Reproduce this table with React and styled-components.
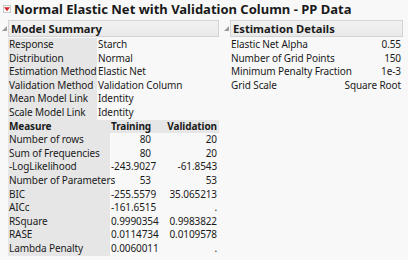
import React from 'react';
import styled, { createGlobalStyle } from 'styled-components';

const GlobalStyle = createGlobalStyle`
  html, body {
    margin: 0;
    padding: 0;
    background: #f8f8f8;
  }
  body {
    font-family: "Noto Sans", "Open Sans", sans-serif;
    font-size: 10px;
    letter-spacing: -0.1px;
    color: #1a1a1a;
  }
`;

const summaryRows = [
  ['Response', 'Starch'],
  ['Distribution', 'Normal'],
  ['Estimation Method', 'Elastic Net'],
  ['Validation Method', 'Validation Column'],
  ['Mean Model Link', 'Identity'],
  ['Scale Model Link', 'Identity'],
];

const measureRows = [
  ['Number of rows', '80', '20'],
  ['Sum of Frequencies', '80', '20'],
  ['-LogLikelihood', '-243.9027', '-61.8543'],
  ['Number of Parameters', '53', '53'],
  ['BIC', '-255.5579', '35.065213'],
  ['AICc', '-161.6515', '.'],
  ['RSquare', '0.9990354', '0.9983822'],
  ['RASE', '0.0114734', '0.0109578'],
  ['Lambda Penalty', '0.0060011', '.'],
];

const detailRows = [
  ['Elastic Net Alpha', '0.55'],
  ['Number of Grid Points', '150'],
  ['Minimum Penalty Fraction', '1e-3'],
  ['Grid Scale', 'Square Root'],
];

const App = () => {
  return (
    <Page>
      <GlobalStyle />
      <TitleRow>
        <RedToggle>
          <svg width="7" height="5" viewBox="0 0 7 5">
            <polygon points="0,0 7,0 3.5,4.5" fill="#d8242a" />
          </svg>
        </RedToggle>
        <TitleText>Normal Elastic Net with Validation Column - PP Data</TitleText>
      </TitleRow>
      <Panels>
        <Outline $width="219px">
          <OutlineHead>
            <GrayToggle />
            <HeadBox>Model Summary</HeadBox>
          </OutlineHead>
          <OutlineBody>
            <Table>
              <colgroup>
                <col style={{ width: 89 }} />
                <col />
              </colgroup>
              <tbody>
                {summaryRows.map(([k, v]) => (
                  <tr key={k}>
                    <LabelCell>{k}</LabelCell>
                    <ValueCell>{v}</ValueCell>
                  </tr>
                ))}
              </tbody>
            </Table>
            <Table>
              <colgroup>
                <col style={{ width: 102 }} />
                <col style={{ width: 43 }} />
                <col />
              </colgroup>
              <thead>
                <tr>
                  <HeadCell>Measure</HeadCell>
                  <HeadCell $right>Training</HeadCell>
                  <HeadCell $right>Validation</HeadCell>
                </tr>
              </thead>
              <tbody>
                {measureRows.map(([k, t, v]) => (
                  <tr key={k}>
                    <LabelCell>{k}</LabelCell>
                    <NumCell>{t}</NumCell>
                    <NumCell>{v}</NumCell>
                  </tr>
                ))}
              </tbody>
            </Table>
          </OutlineBody>
        </Outline>
        <Outline $width="181px">
          <OutlineHead>
            <GrayToggle />
            <HeadBox>Estimation Details</HeadBox>
          </OutlineHead>
          <OutlineBody>
            <Table>
              <tbody>
                {detailRows.map(([k, v]) => (
                  <tr key={k}>
                    <PlainCell>{k}</PlainCell>
                    <NumCell>{v}</NumCell>
                  </tr>
                ))}
              </tbody>
            </Table>
          </OutlineBody>
        </Outline>
      </Panels>
    </Page>
  );
};

export default App;

const Page = styled.div`
  width: 408px;
  height: 260px;
  overflow: hidden;
`;

const TitleRow = styled.div`
  display: flex;
  align-items: center;
  gap: 3px;
  height: 18px;
  padding-left: 3px;
  letter-spacing: 0;
`;

const RedToggle = styled.div`
  width: 8px;
  height: 8px;
  border: 1px solid #c9c9c9;
  background: #fbfbfb;
  display: flex;
  align-items: center;
  justify-content: center;
  box-sizing: border-box;
`;

const TitleText = styled.span`
  font-weight: 700;
  font-size: 13px;
`;

const Panels = styled.div`
  display: flex;
  align-items: flex-start;
  gap: 3px;
  padding-top: 2px;
`;

const Outline = styled.section`
  width: ${(p) => p.$width};
`;

const OutlineHead = styled.div`
  display: flex;
  align-items: center;
`;

const GrayToggle = styled.span`
  width: 0;
  height: 0;
  margin: 0 1px 0 2px;
  border-left: 5px solid transparent;
  border-bottom: 5px solid #9a9a9a;
`;

const HeadBox = styled.h3`
  flex: 1;
  margin: 0;
  height: 17px;
  box-sizing: border-box;
  border: 1px solid #d3d3d3;
  background: linear-gradient(#f2f2f2, #e9e9e9);
  font-size: 11.2px;
  font-weight: 700;
  letter-spacing: 0;
  line-height: 15px;
  padding-left: 2px;
`;

const OutlineBody = styled.div`
  padding: 1px 0 0 8px;
`;

const Table = styled.table`
  border-collapse: collapse;
  width: 100%;
  table-layout: fixed;
  line-height: 13.6px;
`;

const Cell = styled.td`
  padding: 0 0 0 1px;
  white-space: nowrap;
  height: 13.6px;
`;

const LabelCell = styled(Cell)`
  background: #e6e6e6;
`;

const PlainCell = styled(Cell)``;

const ValueCell = styled(Cell)``;

const NumCell = styled(Cell)`
  text-align: right;
  padding-right: 2px;
`;

const HeadCell = styled.th`
  padding: 0 2px 0 1px;
  height: 13.6px;
  background: #e6e6e6;
  font-weight: 700;
  white-space: nowrap;
  text-align: ${(p) => (p.$right ? 'right' : 'left')};
`;
